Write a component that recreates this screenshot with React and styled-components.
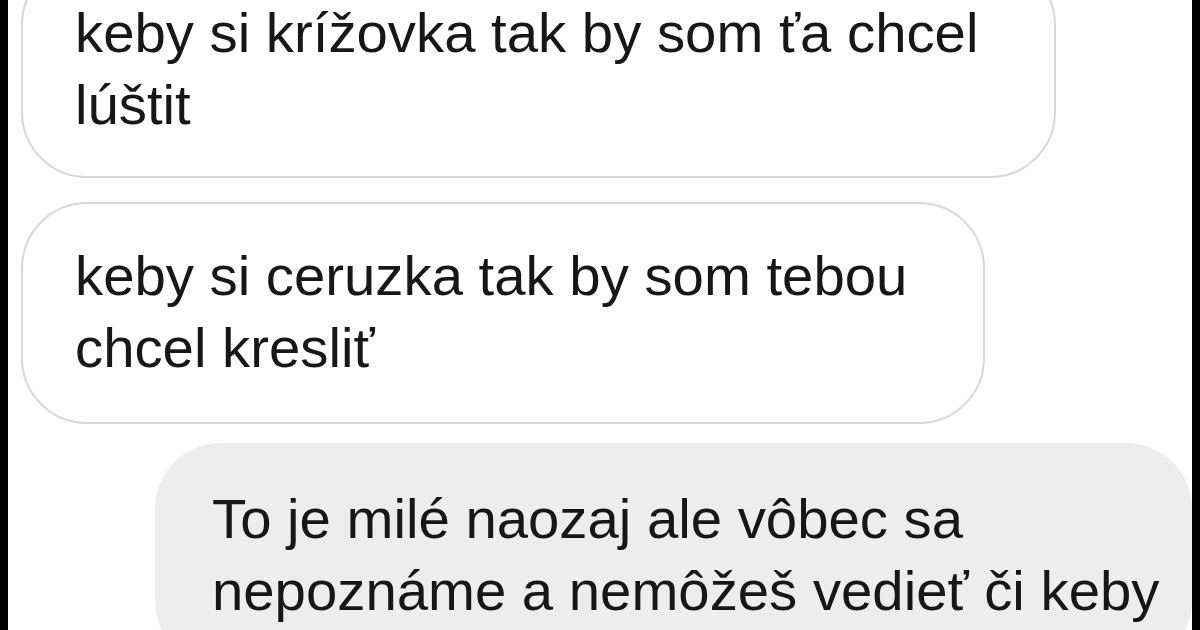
import React from "react";
import styled, { createGlobalStyle } from "styled-components";

const GlobalStyle = createGlobalStyle`
  html, body {
    margin: 0;
    padding: 0;
    background: #ffffff;
    overflow: hidden;
  }
  #root {
    width: 1200px;
    height: 630px;
  }
`;

const Frame = styled.div`
  display: flex;
  width: 1200px;
  height: 630px;
  overflow: hidden;
  background: #000;
`;

const EdgeBar = styled.div`
  width: 8px;
  flex: none;
  background: #000;
`;

const Thread = styled.div`
  flex: 1;
  display: flex;
  flex-direction: column;
  background: #fff;
  padding: 0 0 0 13px;
  overflow: hidden;
`;

const Bubble = styled.div`
  align-self: ${(p) => (p.$mine ? "flex-end" : "flex-start")};
  display: flex;
  flex-direction: column;
  gap: 16px;
  box-sizing: border-box;
  font-family: "Liberation Sans", Arial, sans-serif;
  font-size: 56.3px;
  color: #171717;
  white-space: nowrap;
  border-radius: 66px;
  margin-top: ${(p) => p.$gap}px;
  background: ${(p) => (p.$mine ? "#ededed" : "#ffffff")};
  border: ${(p) => (p.$mine ? "none" : "2px solid #d8d8d8")};
  padding: ${(p) =>
    p.$mine
      ? "48px 40px 48px 57px"
      : `44px 76px ${p.$bottom ?? 46}px 52px`};
  ${(p) => (p.$mine ? "width: 1037px;" : "")}
`;

const Line = styled.span`
  display: block;
  line-height: 56px;
  height: 56px;
`;

export default function App() {
  return (
    <>
      <GlobalStyle />
      <Frame>
        <EdgeBar />
        <Thread>
          <Bubble $gap={-41} $bottom={43}>
            <Line>keby si krížovka tak by som ťa chcel</Line>
            <Line>lúštit</Line>
          </Bubble>
          <Bubble $gap={24}>
            <Line>keby si ceruzka tak by som tebou</Line>
            <Line>chcel kresliť</Line>
          </Bubble>
          <Bubble $mine $gap={19}>
            <Line>To je milé naozaj ale vôbec sa</Line>
            <Line>nepoznáme a nemôžeš vedieť či keby</Line>
          </Bubble>
        </Thread>
        <EdgeBar />
      </Frame>
    </>
  );
}
